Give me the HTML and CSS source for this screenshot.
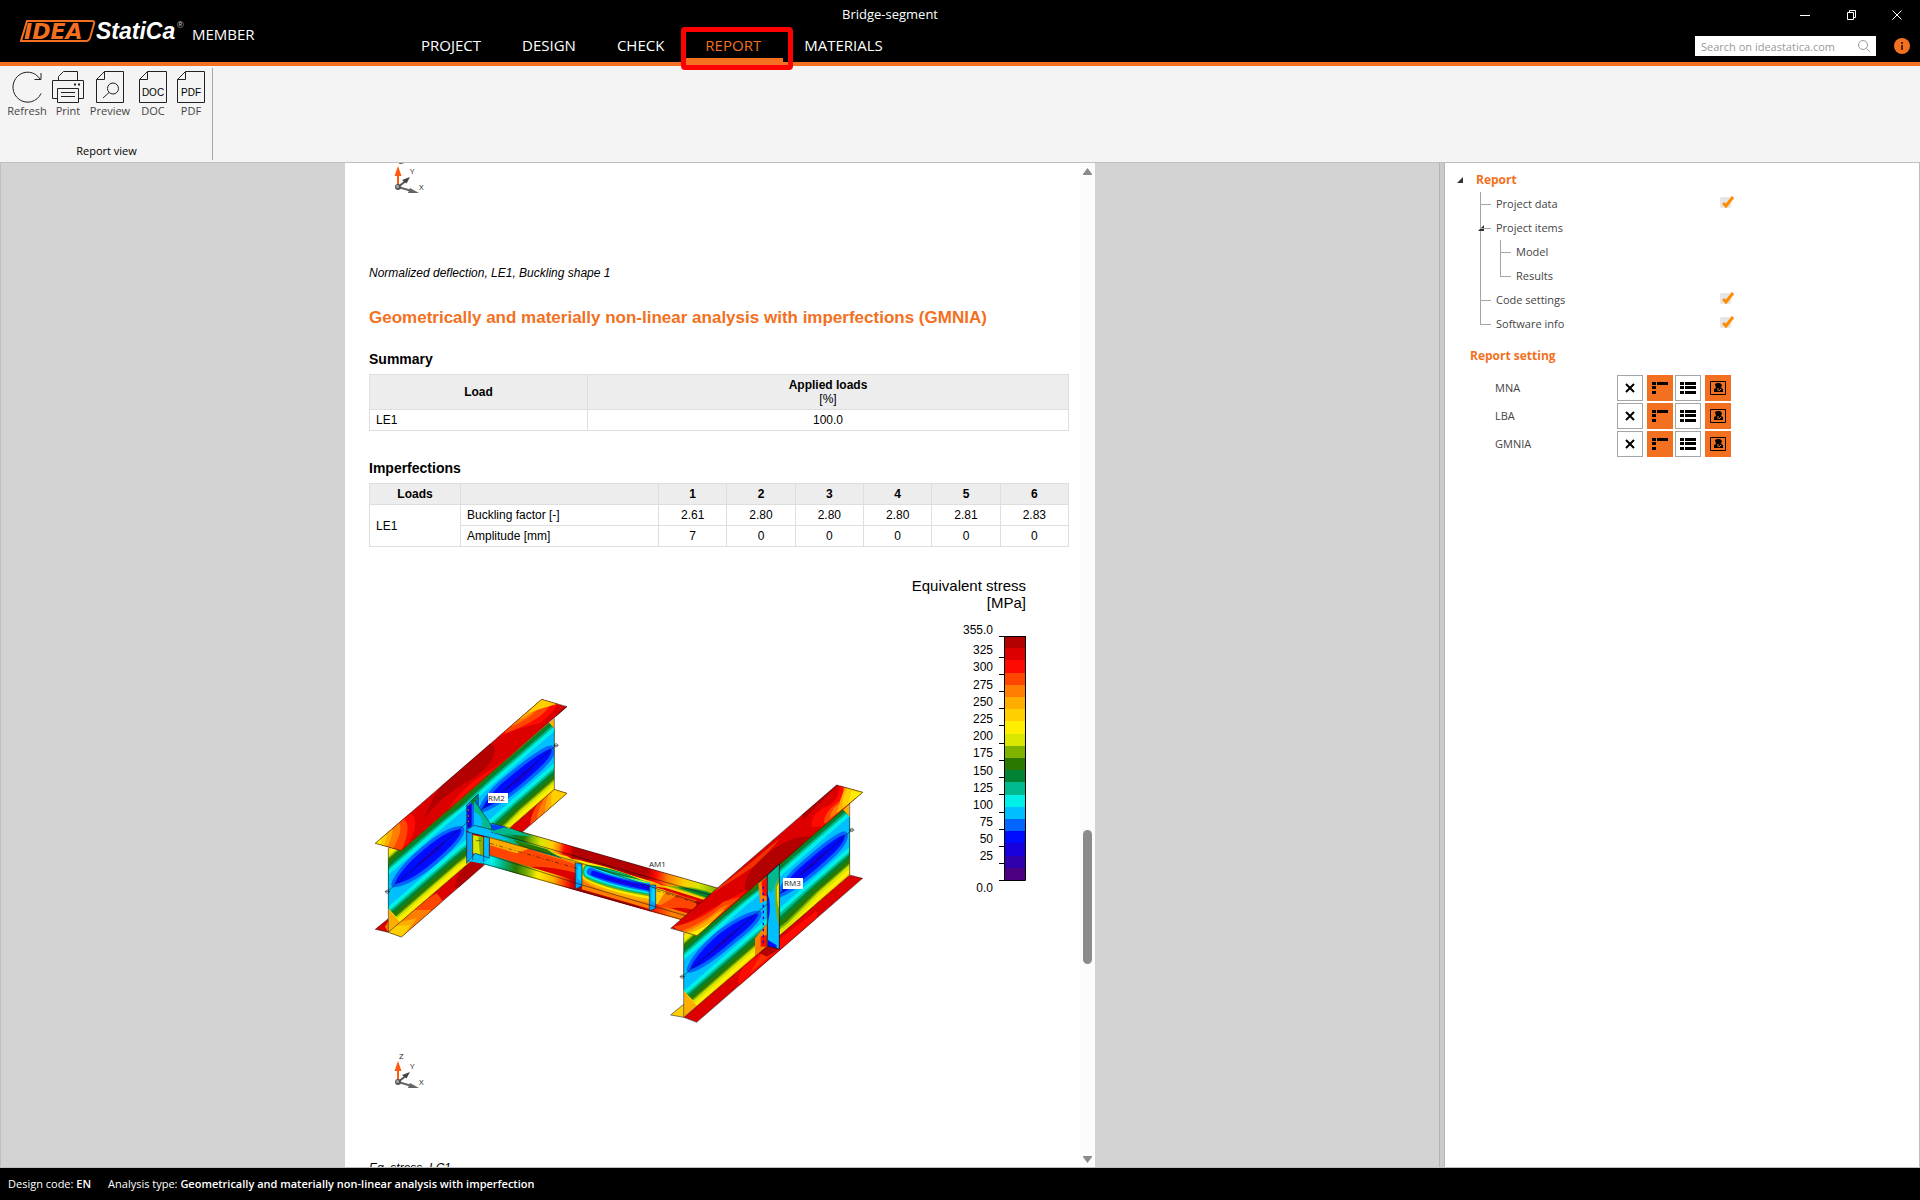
FILE: index.html
```html
<!DOCTYPE html>
<html lang="en">
<head>
<meta charset="utf-8">
<title>Bridge-segment</title>
<link rel="stylesheet" href="styles.css">
</head>
<body>
<header class="topbar">
  <div class="brand">
    <svg class="logo" width="166" height="26" viewBox="0 0 166 26" role="img" aria-label="IDEA StatiCa">
      <path d="M7 3 H72 Q75 3 74 6 L70 20 Q69 23 66 23 H1 Z" fill="#000" stroke="#f37021" stroke-width="2"/>
      <text class="logo-idea" x="4" y="21">IDEA</text>
      <text class="logo-statica" x="76" y="21">StatiCa</text>
      <text class="logo-mark" x="157" y="10">®</text>
    </svg>
    <span class="product">MEMBER</span>
  </div>
  <div class="doc-title">Bridge-segment</div>
  <div class="window-buttons">
    <button type="button" aria-label="Minimize"><svg width="12" height="12"><path d="M1 6.5h10" /></svg></button>
    <button type="button" aria-label="Restore"><svg width="12" height="12"><path d="M2.5 3.500h6v7h-6z M4.500 3V1.500h6v7H9" /></svg></button>
    <button type="button" aria-label="Close"><svg width="12" height="12"><path d="M1.500 1.500l9 9M10.500 1.500l-9 9" /></svg></button>
  </div>
  <nav class="tabs">
    <a href="#project">PROJECT</a>
    <a href="#design">DESIGN</a>
    <a href="#check">CHECK</a>
    <a href="#report" class="active" aria-current="page">REPORT</a>
    <a href="#materials">MATERIALS</a>
  </nav>
  <div class="tools">
    <div class="search">
      <input type="search" placeholder="Search on ideastatica.com" aria-label="Search on ideastatica.com">
      <svg width="14" height="14"><circle cx="6" cy="6" r="4.500"/><path d="M9.500 9.500l3.500 3.500"/></svg>
    </div>
    <button type="button" class="info" aria-label="Information"><svg width="16" height="16"><circle cx="8" cy="8" r="8" fill="#f37021"/><path d="M7 4h2v2H7zM7 7h2v5H7z" fill="#5a2500"/></svg></button>
  </div>
</header>

<section class="ribbon">
  <div class="ribbon-group">
    <div class="ribbon-buttons">
      <button type="button"><svg width="32" height="32"><path d="M30 22.500A14.700 15 0 1 1 29 8M30 2v6.500h-6.500"/></svg>Refresh</button>
      <button type="button"><svg width="32" height="32"><path d="M6.500 9V5.500l5-5h14V9M5 27.500H.5V9.500h31v18H27M5.500 27V17.500h21V27M5.500 22V31.500h21V22M9 21.500h14M9 25.500h14"/><path d="M22 13.500h2M26 13.500h2" class="bold"/></svg>Print</button>
      <button type="button"><svg width="32" height="32"><path d="M2.500 8.500l8-8h19v31h-27zM2.500 8.500h8v-8"/><circle cx="19" cy="17.500" r="5.500"/><path d="M15 21.500L9 27"/></svg>Preview</button>
      <button type="button"><svg width="32" height="32"><path d="M2.500 8.500l8-8h19v31h-27zM2.500 8.500h8v-8"/><text x="16" y="25">DOC</text></svg>DOC</button>
      <button type="button"><svg width="32" height="32"><path d="M2.500 8.500l8-8h19v31h-27zM2.500 8.500h8v-8"/><text x="16" y="25">PDF</text></svg>PDF</button>
    </div>
    <div class="ribbon-label">Report view</div>
  </div>
</section>

<main class="workspace">
  <section class="viewer">
    <div class="sheet">
      <article class="report">
        <svg class="axes-cut" width="60" height="52" viewBox="385 163 60 52" aria-hidden="true">
          <use href="#axes" x="398" y="187"/>
        </svg>
        <p class="caption">Normalized deflection, LE1, Buckling shape 1</p>
        <h2>Geometrically and materially non-linear analysis with imperfections (GMNIA)</h2>
        <h3>Summary</h3>
        <table class="summary">
          <colgroup><col class="c-load"><col></colgroup>
          <thead><tr><th>Load</th><th>Applied loads<br><span>[%]</span></th></tr></thead>
          <tbody><tr><td class="left">LE1</td><td>100.0</td></tr></tbody>
        </table>
        <h3>Imperfections</h3>
        <table class="imperfections">
          <colgroup><col class="c-loads"><col class="c-name"><col span="6"></colgroup>
          <thead><tr><th>Loads</th><th></th><th>1</th><th>2</th><th>3</th><th>4</th><th>5</th><th>6</th></tr></thead>
          <tbody>
            <tr><td class="left" rowspan="2">LE1</td><td class="left">Buckling factor [-]</td><td>2.61</td><td>2.80</td><td>2.80</td><td>2.80</td><td>2.81</td><td>2.83</td></tr>
            <tr><td class="left">Amplitude [mm]</td><td>7</td><td>0</td><td>0</td><td>0</td><td>0</td><td>0</td></tr>
          </tbody>
        </table>

        <figure>
          <svg class="model" width="500" height="544" viewBox="369 566 500 544" role="img" aria-label="Equivalent stress on the bridge segment">
            <defs>
              <g id="axes">
                <path d="M0 0L9 -7" stroke="#555" stroke-width="2"/><path d="M12 -10L8.500 -3.500L4 -7Z" fill="#444"/>
                <path d="M0 0L14 4" stroke="#666" stroke-width="2"/><path d="M21 6L10 6L12 1Z" fill="#666"/>
                <path d="M0 0V-12" stroke="#ff5a10" stroke-width="2"/><path d="M0 -21L3.500 -11H-3.500Z" fill="#ff5a10"/>
                <circle r="3" fill="#555"/><circle r="1.500" cx="-.5" cy="-.5" fill="#aaa"/>
                <text class="tag" x="1" y="-23">Z</text><text class="tag" x="12" y="-13">Y</text><text class="tag" x="21" y="3">X</text>
              </g>
              <clipPath id="webL"><path d="M85 503L124 512L583 115V328L85 757Z"/></clipPath>
              <clipPath id="topL"><path d="M46 490L545 58L621 80L124 512Z"/></clipPath>
              <clipPath id="botL"><path d="M85 757L124 771L621 340L583 328Z"/></clipPath>
              <clipPath id="webR"><path d="M131 518L171 527L629 130V345L131 772Z"/></clipPath>
              <clipPath id="topR"><path d="M92 505L590 75L668 97L171 527Z"/></clipPath>
              <clipPath id="botR"><path d="M131 772L170 787L668 355L629 345Z"/></clipPath>
              <clipPath id="panel"><path d="M305 130L510 188V267L305 208Z"/></clipPath>
              <clipPath id="webC"><path d="M28 50L650 240V290L28 108Z"/></clipPath>
              <linearGradient id="farFlange" gradientUnits="userSpaceOnUse" x1="0" y1="0" x2="720" y2="90">
                <stop offset="0" stop-color="#0066ff"/><stop offset=".07" stop-color="#00bfff"/><stop offset=".1" stop-color="#00b98c"/><stop offset=".15" stop-color="#008433"/><stop offset=".19" stop-color="#2a7800"/><stop offset=".22" stop-color="#80b200"/><stop offset=".26" stop-color="#d8e600"/><stop offset=".31" stop-color="#ffcf00"/><stop offset=".34" stop-color="#ff7d00"/><stop offset=".36" stop-color="#ff0a00"/><stop offset=".39" stop-color="#dd0000"/><stop offset=".4" stop-color="#b30000"/><stop offset=".71" stop-color="#b30000"/><stop offset=".75" stop-color="#ff0a00"/><stop offset=".8" stop-color="#ff7d00"/><stop offset=".87" stop-color="#ffcf00"/><stop offset=".93" stop-color="#d8e600"/><stop offset="1" stop-color="#80b200"/>
              </linearGradient>
              <linearGradient id="lowFlange" gradientUnits="userSpaceOnUse" x1="-10" y1="0" x2="600" y2="80">
                <stop offset="0" stop-color="#00bfff"/><stop offset=".1" stop-color="#00f0e8"/><stop offset=".15" stop-color="#00b98c"/><stop offset=".22" stop-color="#2a7800"/><stop offset=".28" stop-color="#80b200"/><stop offset=".33" stop-color="#ffee00"/><stop offset=".41" stop-color="#ffae00"/><stop offset=".46" stop-color="#ff4600"/><stop offset=".5" stop-color="#dd0000"/><stop offset=".53" stop-color="#b30000"/><stop offset=".82" stop-color="#b30000"/><stop offset=".9" stop-color="#ff0a00"/><stop offset="1" stop-color="#ff7d00"/>
              </linearGradient>
            </defs>

            <!-- left girder RM2 -->
            <g transform="translate(360 680) scale(.33333)">
              <g clip-path="url(#botL)">
                <path d="M85 757L124 771L621 340L583 328Z" fill="#dd0000"/>
                <path d="M80 775L130 700L230 640L250 665L120 790Z" fill="#ff4600"/>
                <path d="M80 775L110 720L165 690L215 690L120 790Z" fill="#ff7d00"/>
                <path d="M80 775L105 730L170 715L120 790Z" fill="#ffae00"/>
                <path d="M80 775L85 740L150 735L120 790Z" fill="#ffcf00"/>
                <path d="M285 625Q290 570 340 540L380 545L300 620Z" fill="#b30000"/>
                <path d="M510 440Q510 390 560 340L640 330V360Z" fill="#ff4600"/>
                <path d="M530 420Q535 375 570 330L640 330V360Z" fill="#ff7d00"/>
                <path d="M555 400Q555 360 575 325L640 330V360Z" fill="#ffae00"/>
                <path d="M575 385Q570 350 580 320L640 330V360Z" fill="#ffcf00"/>
              </g>
              <path d="M46 748L85 716V757Z" fill="#dd0000"/><path d="M75 740L85 724V757Z" fill="#ff7d00"/>
              <g clip-path="url(#webL)" fill="none" stroke-linejoin="round">
                <path d="M85 503L124 512L583 115V328L85 757Z" fill="#ffae00"/>
                <path d="M230 690L340 585L600 350" stroke="#ff7d00" stroke-width="46"/>
                <path d="M240 690L340 595L500 450" stroke="#ff4600" stroke-width="34"/>
                <path d="M290 640L340 592L460 485" stroke="#dd0000" stroke-width="22"/>
                <path d="M300 370L350 325L400 290" stroke="#ff4600" stroke-width="40"/>
                <path d="M330 350L400 285" stroke="#ff0a00" stroke-width="22"/>
                <path d="M60 658L240 502Q290 462 340 432L430 340L610 184" stroke="#ffcf00" stroke-width="196"/>
                <path d="M60 657L240 501Q290 462 340 430L430 338L610 182" stroke="#ffee00" stroke-width="182"/>
                <path d="M60 655L240 499Q290 460 340 428L430 337L610 180" stroke="#d8e600" stroke-width="164"/>
                <path d="M60 654L240 498Q290 458 340 425L430 335L610 178" stroke="#80b200" stroke-width="152"/>
                <path d="M60 654L240 498Q290 457 340 422L430 334L610 178" stroke="#2a7800" stroke-width="144"/>
                <path d="M60 654L240 498Q290 456 340 420L430 334L610 178" stroke="#008433" stroke-width="124"/>
                <path d="M60 654L240 498Q290 455 340 418L430 334L610 178" stroke="#00b98c" stroke-width="106"/>
                <path d="M60 654L240 498Q290 455 340 416L430 334L610 178" stroke="#00f0e8" stroke-width="94"/>
                <path d="M60 654L240 498Q290 455 340 414L430 334L610 178" stroke="#00bfff" stroke-width="72"/>
                <g stroke="#0066ff" stroke-width="20" fill="#000cff" paint-order="stroke">
                  <path d="M104 612Q120 565 215 490Q270 448 303 448Q310 465 250 520Q160 605 104 612Z"/>
                  <path d="M365 388Q390 335 450 290Q540 215 572 206Q585 218 540 262Q430 365 365 388Z"/>
                </g>
                <path d="M165 562Q205 515 260 480Q235 520 165 562ZM430 335Q475 285 530 250Q500 295 430 335Z" fill="#1700dc"/>
              </g>
              <g clip-path="url(#topL)">
                <path d="M46 490L545 58L621 80L124 512Z" fill="#dd0000"/>
                <path d="M190 420Q230 310 330 225Q400 170 405 205Q400 260 330 300Q240 350 190 420Z" fill="#b30000"/>
                <path d="M580 120Q600 80 640 70V90L560 150Z" fill="#b30000"/>
                <path d="M250 410Q300 320 400 265L470 210L420 290L270 420Z" fill="#ff0a00"/>
                <path d="M300 380Q340 320 400 275L420 265L350 345Z" fill="#ff4600"/><path d="M325 350Q370 300 400 285L360 335Z" fill="#ff7d00"/>
                <path d="M40 400H150Q190 420 130 520H40Z" fill="#ff0a00"/>
                <path d="M40 395L130 415Q160 440 120 520H40Z" fill="#ff4600"/>
                <path d="M40 415L115 425Q135 450 90 520H40Z" fill="#ff7d00"/>
                <path d="M40 435L95 440Q105 465 70 520H40Z" fill="#ffae00"/>
                <path d="M40 450L80 450Q85 475 60 520H40Z" fill="#ffcf00"/><path d="M40 470L65 470L60 510H40Z" fill="#ffee00"/>
                <path d="M410 175Q450 150 540 130Q580 100 600 60L540 40L400 150Z" fill="#ff0a00"/>
                <path d="M435 160Q520 130 555 95L585 60L540 40L440 130Z" fill="#ff4600"/>
                <path d="M450 140Q520 115 555 60L540 40L440 130Z" fill="#ff7d00"/>
                <path d="M480 118Q520 100 560 60L545 40L470 110Z" fill="#ffae00"/>
                <path d="M505 98Q545 85 590 72L545 50Z" fill="#ffcf00"/>
              </g>
              <g class="edge">
                <path d="M46 490L545 58L621 80L124 512ZM85 503V757M583 115V328M46 748L85 757L124 771L621 340L583 328L85 757M46 748L85 716"/>
                <path d="M82 635L588 196"/><circle cx="82" cy="635" r="5"/><circle cx="588" cy="196" r="5"/><path d="M74 635h16M580 196h16"/>
              </g>
            </g>

            <!-- cross member AM1 -->
            <g transform="translate(480 820) scale(.33333)">
              <path d="M-40 30L35 10L740 212L640 310L0 128L-40 120Z" fill="#dd0000"/>
              <path d="M-35 25L35 10L740 212L700 235L20 50Z" fill="url(#farFlange)"/>
              <path d="M150 80L260 108L300 130L250 118Z" fill="#ffcf00"/>
              <path d="M-30 30L60 45L200 88L250 118L20 52Z" fill="#00b98c"/><path d="M100 60L200 88L230 108L120 78Z" fill="#2a7800"/><path d="M-20 30L50 42L90 62L40 54Z" fill="#00bfff"/>
              <path d="M540 195L700 215L690 245L560 205Z" fill="#ffcf00"/><path d="M560 198Q640 195 710 222L690 240Q620 215 560 198Z" fill="#80b200"/><path d="M590 202Q650 204 705 224L690 236Z" fill="#008433"/>
              <g clip-path="url(#webC)">
                <path d="M28 50L650 240V290L28 108Z" fill="#ff4600"/>
                <path d="M28 50L150 85L110 100L28 75Z" fill="#ffae00"/>
                <path d="M60 75Q200 100 290 135L280 120Z" fill="#ff7d00"/>
                <path d="M110 145Q190 130 290 160V210Z" fill="#dd0000"/>
                <path d="M170 165Q240 165 290 178V210Z" fill="#b30000"/>
                <path d="M525 200L600 220L560 245L525 265Z" fill="#ff7d00"/><path d="M525 195L560 210L540 240L525 265Z" fill="#ffcf00"/>
                <path d="M550 270Q600 255 660 275V300Z" fill="#dd0000"/>
              </g>
              <path d="M-40 105L28 105L640 285L620 305L0 130L-40 122Z" fill="url(#lowFlange)"/>
              <path d="M250 118Q290 110 340 135L510 182Q540 190 560 205L530 200L290 130Z" fill="#ffae00"/>
              <path d="M270 120Q330 124 400 148L525 190L290 128Z" fill="#ffee00"/>
              <g clip-path="url(#panel)" fill="none" stroke-linecap="round">
                <path d="M300 125H515V270L300 210Z" fill="#ff7d00"/>
                <path d="M335 157Q400 195 530 215" stroke="#ffae00" stroke-width="70"/>
                <path d="M333 155Q400 190 530 210" stroke="#ffee00" stroke-width="60"/>
                <path d="M331 155Q400 188 530 207" stroke="#80b200" stroke-width="50"/>
                <path d="M330 155Q400 188 530 206" stroke="#00b98c" stroke-width="42"/>
                <path d="M330 155Q400 187 530 206" stroke="#00f0e8" stroke-width="34"/>
                <path d="M332 155Q400 187 530 207" stroke="#0066ff" stroke-width="24"/>
                <path d="M340 160Q420 188 530 208" stroke="#000cff" stroke-width="15"/>
                <path d="M380 173Q440 190 530 208" stroke="#1700dc" stroke-width="6"/>
                <path d="M340 140L500 188" stroke="#d8e600" stroke-width="3"/>
              </g>
              <path d="M320 134Q400 142 485 180Q400 165 320 134Z" fill="#008433"/><path d="M345 142Q400 148 460 172Z" fill="#00b98c"/>
              <path d="M286 128L306 132V198L286 208Z" fill="#00a0ff"/><path d="M294 135L303 140V185L292 175Z" fill="#00d5ff"/>
              <path d="M508 195L527 195V265L508 273Z" fill="#00a0ff"/><path d="M516 205L524 205V250L514 240Z" fill="#00d5ff"/>
              <g class="edge">
                <path d="M35 10L740 212M30 35L690 225M-35 35L290 125L660 250M25 105L290 190L620 288M0 128L290 210L610 300"/>
                <path d="M30 70L290 145M530 212L680 258" stroke-dasharray="12 7 3 7"/>
                <path d="M286 128L306 132V198L286 208ZM508 195H527V265L508 273Z"/>
              </g>
            </g>

            <!-- connection of AM1 to RM2 -->
            <g transform="translate(360 680) scale(.33333)">
              <path d="M320 375L355 342V435L320 450Z" fill="#0066ff"/><path d="M322 380L335 370V440L322 445Z" fill="#1700dc"/><path d="M330 365L352 345V360L340 375Z" fill="#008433"/>
              <path d="M342 360L395 437V450L342 440Z" fill="#00b98c"/><path d="M342 395Q370 405 368 440L342 436Z" fill="#00bfff"/>
              <path d="M320 450L340 436L400 448L385 470L330 458Z" fill="#00bfff"/><path d="M360 430L450 445L520 470L400 458Z" fill="#00b98c"/><path d="M390 433L440 440L400 452Z" fill="#0040ff"/>
              <path d="M320 455L338 460V540L320 550Z" fill="#00a0ff"/><path d="M338 465L370 472V530L338 520Z" fill="#d8e600"/><path d="M355 468L370 472V530L360 525Z" fill="#80b200"/>
              <path d="M372 470L388 474V535L372 547Z" fill="#00bfff"/><path d="M320 540L345 520L375 528L370 548Z" fill="#00bfff"/>
              <path d="M325 372v4m0 12v4m0 14v4m0 12v4m0 84v4" stroke="#ff4600" stroke-width="4"/>
              <g class="edge"><path d="M320 375L355 342V375M320 375V552M342 360L395 437V450M322 450L342 436L400 450M320 455L385 472M338 460V540M371 470V546M388 474V534M320 548L345 520L388 534M348 482h14"/></g>
            </g>

            <!-- right girder RM3 -->
            <g transform="translate(640 760) scale(.33333)">
              <g clip-path="url(#botR)">
                <path d="M131 772L170 787L668 355L629 345Z" fill="#dd0000"/>
                <path d="M295 665Q300 610 350 590L440 520L520 460Q540 440 525 485L300 680Z" fill="#ff0a00"/>
                <path d="M370 570L420 560L330 640Z" fill="#ff4600" opacity=".6"/><path d="M350 575L400 550L420 566L380 590Z" fill="#b30000"/>
              </g>
              <path d="M92 765L131 733V772Z" fill="#ffcf00"/>
              <g clip-path="url(#webR)" fill="none" stroke-linejoin="round">
                <path d="M131 518L171 527L629 130V345L131 772Z" fill="#ffae00"/>
                <path d="M200 735L380 578L620 370" stroke="#ff7d00" stroke-width="44"/>
                <path d="M240 700L380 578L480 492" stroke="#ff4600" stroke-width="22"/>
                <path d="M320 410L400 340" stroke="#ff4600" stroke-width="46"/><path d="M350 400L390 350" stroke="#dd0000" stroke-width="26"/>
                <path d="M110 669L280 520Q330 478 390 445L480 350L650 202" stroke="#ffcf00" stroke-width="196"/>
                <path d="M110 668L280 519Q330 477 390 443L480 349L650 200" stroke="#ffee00" stroke-width="182"/>
                <path d="M110 667L280 518Q330 475 390 440L480 348L650 198" stroke="#d8e600" stroke-width="164"/>
                <path d="M110 666L280 517Q330 474 390 437L480 346L650 196" stroke="#80b200" stroke-width="150"/>
                <path d="M110 665L280 517Q330 473 390 434L480 345L650 196" stroke="#2a7800" stroke-width="142"/>
                <path d="M110 665L280 517Q330 472 390 430L480 344L650 196" stroke="#008433" stroke-width="122"/>
                <path d="M110 665L280 517Q330 472 390 427L480 344L650 196" stroke="#00b98c" stroke-width="104"/>
                <path d="M110 665L280 517Q330 472 390 425L480 344L650 196" stroke="#00f0e8" stroke-width="92"/>
                <path d="M110 665L280 517Q330 472 390 423L480 344L650 196" stroke="#00bfff" stroke-width="70"/>
                <g stroke="#0066ff" stroke-width="20" fill="#000cff" paint-order="stroke">
                  <path d="M150 628Q165 585 240 520Q320 462 355 462Q350 485 290 532Q190 620 150 628Z"/>
                  <path d="M420 402Q440 355 495 310Q580 235 612 224Q622 238 580 280Q480 375 420 402Z"/>
                </g>
                <path d="M200 590Q245 535 300 502Q270 545 200 590ZM470 350Q515 300 570 262Q540 310 470 350Z" fill="#1700dc"/>
                <path d="M355 370L382 350V420L360 430Z" fill="#ff7d00"/><path d="M365 365L382 350V410L368 405Z" fill="#ff0a00"/>
                <path d="M345 535L382 490V560L345 590Z" fill="#ff7d00"/><path d="M362 530L382 525V560L362 560Z" fill="#ff0a00"/>
                <path d="M370 380V560" stroke="#1700dc" stroke-width="4" stroke-dasharray="8 10"/>
              </g>
              <g clip-path="url(#topR)">
                <path d="M92 505L590 75L668 97L171 527Z" fill="#dd0000"/>
                <path d="M315 390Q310 340 380 280Q460 225 510 230L450 290L330 390Z" fill="#b30000"/>
                <path d="M490 180Q520 150 600 70L570 60L480 140Z" fill="#b30000"/>
                <path d="M200 410L330 310L420 235Q400 265 340 320Q280 360 200 410Z" fill="#ff4600" opacity=".7"/>
                <path d="M120 505Q200 450 320 390L280 440L160 540Z" fill="#ff0a00"/>
                <path d="M100 500Q190 480 250 425L300 410L160 540Z" fill="#ff4600"/>
                <path d="M120 515Q190 490 240 445L270 430L160 540Z" fill="#ff7d00"/>
                <path d="M130 520Q190 495 230 460L255 448L160 540Z" fill="#ffae00"/>
                <path d="M145 520Q180 510 215 485L170 540Z" fill="#ffee00"/>
                <path d="M515 200Q510 160 560 140Q600 120 600 70L680 90L570 200Z" fill="#ff0a00"/>
                <path d="M552 190Q550 160 590 130Q620 110 605 70L680 90L570 190Z" fill="#ff4600"/>
                <path d="M570 175Q570 150 600 130L620 75L680 90Z" fill="#ff7d00"/>
                <path d="M590 160Q600 120 615 80L680 90Z" fill="#ffae00"/>
                <path d="M608 145Q605 110 625 82L680 90Z" fill="#ffcf00"/><path d="M625 128L635 92L672 97Z" fill="#ffee00"/>
              </g>
              <path d="M382 345L418 312V567L382 558Z" fill="#00bfff"/>
              <path d="M384 345L418 314V350Q400 380 395 400L384 390Z" fill="#00b98c"/>
              <path d="M405 380Q418 350 418 350V500Q404 460 405 380Z" fill="#80b200"/><path d="M411 380L418 365V450Q410 430 411 380Z" fill="#ffee00"/>
              <path d="M382 400Q396 430 384 490ZM384 540L410 556V565L384 558Z" fill="#000cff"/>
              <g class="edge">
                <path d="M92 505L590 75L668 97L171 527ZM131 518V772M629 130V345M92 765L131 772L170 787L668 355L629 345M92 765L131 733M131 772L382 558M418 527L629 345"/>
                <path d="M382 345L418 312V567L382 558Z" class="strong"/>
                <path d="M127 650L382 432M418 402L635 210"/><circle cx="127" cy="650" r="5"/><circle cx="635" cy="210" r="5"/><path d="M119 650h16M627 210h16"/>
              </g>
            </g>

            <path d="M488 793h20v10h-20zM783 878h20v11h-20z" fill="#fff"/>
            <text class="tag" x="488" y="801">RM2</text>
            <text class="tag" x="649" y="867">AM1</text>
            <text class="tag" x="784" y="886">RM3</text>
            <use href="#axes" x="398" y="1082"/>
          </svg>
          <svg class="legend" width="160" height="344" viewBox="869 566 160 344" role="img" aria-label="Equivalent stress scale">
            <g class="legend-title"><text x="1026" y="591">Equivalent stress</text><text x="1026" y="608">[MPa]</text></g>
            <g id="bands" transform="translate(1005 636)">
              <rect width="21" height="13" fill="#b30000"/><rect y="12" width="21" height="13" fill="#dd0000"/><rect y="24" width="21" height="13" fill="#ff0a00"/><rect y="37" width="21" height="13" fill="#ff4600"/><rect y="49" width="21" height="13" fill="#ff7d00"/><rect y="61" width="21" height="13" fill="#ffae00"/><rect y="73" width="21" height="13" fill="#ffcf00"/><rect y="85" width="21" height="13" fill="#ffee00"/><rect y="98" width="21" height="13" fill="#d8e600"/><rect y="110" width="21" height="13" fill="#80b200"/><rect y="122" width="21" height="13" fill="#2a7800"/><rect y="134" width="21" height="13" fill="#008433"/><rect y="146" width="21" height="13" fill="#00b98c"/><rect y="159" width="21" height="13" fill="#00f0e8"/><rect y="171" width="21" height="13" fill="#00bfff"/><rect y="183" width="21" height="13" fill="#0066ff"/><rect y="195" width="21" height="13" fill="#000cff"/><rect y="207" width="21" height="13" fill="#1700dc"/><rect y="220" width="21" height="13" fill="#3000ad"/><rect y="232" width="21" height="12" fill="#4c0082"/>
              <path class="frame" d="M-6 .5H20.500V244.500H-6M-.5 0V244M-6 21.500H0M-6 38.500H0M-6 55.500H0M-6 72.500H0M-6 89.500H0M-6 107.500H0M-6 124.500H0M-6 141.500H0M-6 158.500H0M-6 176.500H0M-6 193.500H0M-6 210.500H0M-6 227.500H0"/>
            </g>
            <g class="legend-values">
              <text x="993" y="634">355.0</text><text x="993" y="654">325</text><text x="993" y="671">300</text><text x="993" y="689">275</text><text x="993" y="706">250</text><text x="993" y="723">225</text><text x="993" y="740">200</text><text x="993" y="757">175</text><text x="993" y="775">150</text><text x="993" y="792">125</text><text x="993" y="809">100</text><text x="993" y="826">75</text><text x="993" y="843">50</text><text x="993" y="860">25</text><text x="993" y="892">0.0</text>
            </g>
          </svg>
        </figure>
        <p class="caption">Eq. stress, LC1</p>
      </article>
      <div class="scrollbar" aria-hidden="true">
        <svg width="9" height="7"><path d="M4.500 0L9 6V7H0V6Z"/></svg>
        <div class="track"><div class="thumb"></div></div>
        <svg width="9" height="7"><path d="M4.500 7L9 1V0H0V1Z"/></svg>
      </div>
    </div>
  </section>
  <div class="splitter"></div>

  <aside class="panel">
    <ul class="tree">
      <li>
        <div class="node root"><svg class="expander" width="6" height="6"><path d="M6 0V6H0Z"/></svg>Report</div>
        <ul>
          <li><div class="node"><label for="c1">Project data</label><span class="check"><input type="checkbox" id="c1" checked><svg width="12" height="12"><path d="M1 7l3 3L11 1"/></svg></span></div></li>
          <li><div class="node"><svg class="expander over" width="6" height="6"><path d="M6 0V6H0Z"/></svg>Project items</div>
            <ul>
              <li><div class="node">Model</div></li>
              <li><div class="node">Results</div></li>
            </ul>
          </li>
          <li><div class="node"><label for="c2">Code settings</label><span class="check"><input type="checkbox" id="c2" checked><svg width="12" height="12"><path d="M1 7l3 3L11 1"/></svg></span></div></li>
          <li><div class="node"><label for="c3">Software info</label><span class="check"><input type="checkbox" id="c3" checked><svg width="12" height="12"><path d="M1 7l3 3L11 1"/></svg></span></div></li>
        </ul>
      </li>
    </ul>
    <h4>Report setting</h4>
    <svg class="symbols" width="0" height="0" aria-hidden="true"><defs>
      <g id="i-none"><path d="M1 1l8 8M9 1l-8 8" transform="translate(3 3)" stroke="#000" stroke-width="2" fill="none"/></g>
      <g id="i-short"><path d="M0 2h4v3H0zM5 2h11v3H5zM0 6h4v3H0zM0 11h4v3H0z"/></g>
      <g id="i-full"><path d="M0 2h4v3H0zM5 2h11v3H5zM0 6h4v3H0zM5 6h11v3H5zM0 11h4v3H0zM5 11h11v3H5z"/></g>
      <g id="i-image"><path d="M.5 1.500h15v13H.5z" fill="none" stroke="#000"/><path d="M5 4l2-1h3l2 2-1 3 2 1v3H4V9l2-1z"/><path d="M8 8v3M9 11l2-2" stroke="#f37021"/></g>
    </defs></svg>
    <div class="settings">
      <div class="setting"><span>MNA</span><div class="choices">
        <button type="button" aria-label="None"><svg width="16" height="16"><use href="#i-none"/></svg></button><button type="button" class="on" aria-label="Brief"><svg width="16" height="16"><use href="#i-short"/></svg></button>
        <button type="button" aria-label="Detailed"><svg width="16" height="16"><use href="#i-full"/></svg></button><button type="button" class="on" aria-label="Pictures"><svg width="16" height="16"><use href="#i-image"/></svg></button>
      </div></div>
      <div class="setting"><span>LBA</span><div class="choices">
        <button type="button" aria-label="None"><svg width="16" height="16"><use href="#i-none"/></svg></button><button type="button" class="on" aria-label="Brief"><svg width="16" height="16"><use href="#i-short"/></svg></button>
        <button type="button" aria-label="Detailed"><svg width="16" height="16"><use href="#i-full"/></svg></button><button type="button" class="on" aria-label="Pictures"><svg width="16" height="16"><use href="#i-image"/></svg></button>
      </div></div>
      <div class="setting"><span>GMNIA</span><div class="choices">
        <button type="button" aria-label="None"><svg width="16" height="16"><use href="#i-none"/></svg></button><button type="button" class="on" aria-label="Brief"><svg width="16" height="16"><use href="#i-short"/></svg></button>
        <button type="button" aria-label="Detailed"><svg width="16" height="16"><use href="#i-full"/></svg></button><button type="button" class="on" aria-label="Pictures"><svg width="16" height="16"><use href="#i-image"/></svg></button>
      </div></div>
    </div>
  </aside>
</main>

<footer class="status">
  <span>Design code: <b>EN</b></span>
  <span>Analysis type: <b>Geometrically and materially non-linear analysis with imperfection</b></span>
</footer>
</body>
</html>
```
FILE: styles.css
```css
* { box-sizing: border-box; }
body {
  margin: 0;
  height: 100vh;
  display: flex;
  flex-direction: column;
  background: #f4f4f4;
  color: #444;
  font: 12px/16px "Open Sans", "Noto Sans", sans-serif;
}
button { margin: 0; padding: 0; border: 0; background: none; font: inherit; color: inherit; }
h2, h3, h4, p, figure, ul { margin: 0; padding: 0; }
ul { list-style: none; }

/* top bar */
.topbar {
  flex: none;
  display: grid;
  grid-template-columns: 401px 1fr 140px;
  grid-template-rows: 30px 32px;
  background: #000;
  color: #fff;
  border-bottom: 4px solid #f37021;
}
.brand { grid-area: 1 / 1 / 3 / 2; display: flex; align-items: center; gap: 6px; padding-left: 20px; }
.product { font-size: 15px; line-height: 20px; padding-top: 6px; }
.logo-idea { font: italic bold 22px "DejaVu Sans", sans-serif; fill: #f37021; }
.logo-statica { font: italic bold 23px "Liberation Sans", sans-serif; fill: #fff; }
.logo-mark { font: 9px "Liberation Sans", sans-serif; fill: #ccc; }
.doc-title { grid-area: 1 / 1 / 2 / 3; text-align: center; font-size: 13px; line-height: 28px; }
.window-buttons { grid-area: 1 / 3 / 2 / 4; display: flex; justify-content: flex-end; }
.window-buttons button { width: 46px; height: 30px; display: grid; place-items: center; }
.window-buttons path { fill: none; stroke: #fff; }
.tabs { grid-area: 2 / 2 / 3 / 3; display: flex; gap: 1px; font-size: 15px; line-height: 30px; }
.tabs a { position: relative; padding: 0 20px; color: #fff; text-decoration: none; }
.tabs a.active { padding-right: 22px; color: #f37021; box-shadow: inset 0 -4px #f37021; }
.tabs a.active::after {
  content: "";
  position: absolute;
  inset: -3px -10px -8px -4px;
  border: 5px solid #f00;
  border-radius: 4px;
  z-index: 1;
}
.tools { grid-area: 2 / 2 / 3 / 4; justify-self: end; display: flex; align-items: center; gap: 18px; padding-right: 10px; }
.search { display: flex; align-items: center; width: 181px; height: 20px; background: #fff; padding: 0 5px 0 6px; }
.search input { flex: 1; min-width: 0; border: 0; padding: 0; background: none; font: 11px "Open Sans", sans-serif; outline: 0; }
.search input::placeholder { color: #999; }
.search svg { fill: none; stroke: #999; }
.info { height: 16px; }

/* ribbon */
.ribbon { flex: none; height: 97px; padding: 2px 0; border-bottom: 1px solid #bfbfbf; }
.ribbon-group { display: flex; flex-direction: column; justify-content: space-between; width: 213px; height: 92px; border-right: 1px solid #a5a5a5; padding: 3px 0 1px 5px; }
.ribbon-buttons { display: grid; grid-template-columns: 44px 38px 46px 40px 36px; justify-items: center; }
.ribbon-buttons button { display: flex; flex-direction: column; align-items: center; font-size: 11px; }
.ribbon-buttons svg { fill: none; stroke: #222; }
.ribbon-buttons .bold { stroke-width: 2; }
.ribbon-buttons text { font: 10px "Liberation Sans", sans-serif; fill: #000; stroke: none; text-anchor: middle; }
.ribbon-label { padding-right: 4px; text-align: center; color: #000; font-size: 11px; }

/* workspace */
.workspace { flex: 1; min-height: 0; display: flex; border-bottom: 1px solid #bfbfbf; }
.viewer { flex: 1; min-width: 0; display: flex; justify-content: center; background: #d3d3d3; border-left: 1px solid #bfbfbf; border-right: 1px solid #b5b5b5; overflow: hidden; }
.splitter { flex: none; width: 4px; background: #cbcbcb; }
.sheet { width: 750px; display: flex; background: #fff; overflow: hidden; }
.report { flex: 1; padding: 0 11px 0 24px; color: #000; font: 12px/14px "Liberation Sans", Arial, sans-serif; }
.axes-cut { display: block; margin-left: 16px; }
.caption { font-style: italic; padding-top: 51px; line-height: 14px; }
.report h2 { padding-top: 28px; font-size: 17px; line-height: 20px; color: #f37021; white-space: nowrap; }
.report h3 { padding: 23px 0 7px; font-size: 14px; line-height: 16px; }
.report table { width: 700px; border-collapse: collapse; table-layout: fixed; }
.report th, .report td { height: 21px; border: 1px solid #dedede; padding: 3px 6px; text-align: center; }
.report th { background: #ededed; }
.report th span { font-weight: normal; }
.report .left { text-align: left; }
.report .c-load { width: 218px; }
.report .c-loads { width: 91px; }
.report .c-name { width: 198px; }
.report .summary + h3 { padding-top: 29px; }
figure { display: flex; align-items: flex-start; padding-top: 19px; }
.tag { font: 8px "Open Sans", sans-serif; fill: #222; }
.edge { fill: none; stroke: #111; stroke-width: 2; stroke-opacity: .8; }
.edge .strong { stroke-width: 3; }
.legend-title { font-size: 15px; text-anchor: end; }
.legend-values { font-size: 12px; text-anchor: end; }
.frame { fill: none; stroke: #000; }

.scrollbar { flex: none; width: 15px; display: flex; flex-direction: column; align-items: center; gap: 4px; padding: 5px 0 4px; background: #fcfcfc; }
.scrollbar svg { fill: #8b8b8b; }
.track { flex: 1; display: grid; grid-template-rows: 650fr 133fr 188fr; }
.thumb { grid-row: 2; width: 9px; border-radius: 5px; background: #8b8b8b; }

/* side panel */
.panel { flex: none; width: 476px; background: #fff; border-left: 1px solid #b5b5b5; border-right: 1px solid #bfbfbf; padding: 5px 0 0 12px; font-size: 11px; }
.node { position: relative; display: flex; align-items: center; height: 24px; }
.root { gap: 13px; font-size: 12px; font-weight: bold; color: #f37021; }
.expander { fill: #333; }
.over { position: absolute; left: -18px; }
.tree ul { padding-left: 39px; position: relative; }
.tree ul ul { padding-left: 20px; }
.tree ul > li { position: relative; }
.tree ul > li::before { content: ""; position: absolute; left: -16px; top: 0; bottom: 0; border-left: 1px solid #a5a5a5; }
.tree ul > li:last-child::before { bottom: auto; height: 12px; }
.tree ul > li::after { content: ""; position: absolute; left: -16px; top: 12px; width: 11px; border-top: 1px solid #a5a5a5; }
.check { position: absolute; left: 224px; top: 4px; width: 14px; height: 12px; }
.check input { appearance: none; display: block; width: 11px; height: 11px; margin: 1px 0 0; border-radius: 2px; background: #e6e6e6; }
.check svg { position: absolute; left: 2px; top: 0; fill: none; stroke: #ff8c00; stroke-width: 3; pointer-events: none; }
.panel h4 { padding: 10px 0 9px 13px; font-size: 12px; line-height: 20px; color: #f37021; }
.symbols { position: absolute; }
.settings { display: grid; gap: 2px; }
.setting { display: grid; grid-template-columns: 122px auto; align-items: center; padding-left: 38px; height: 26px; }
.choices { display: grid; grid-template-columns: 30px 28px 30px 26px; }
.choices button { display: grid; place-items: center; width: 26px; height: 26px; border: 1px solid #a5a5a5; background: #fff; }
.choices .on { border-color: #f37021; background: #f37021; }

/* status bar */
.status { flex: none; display: flex; gap: 17px; height: 32px; padding: 0 8px; background: #000; color: #fff; font-size: 11px; line-height: 32px; }
.status b { font-weight: 600; }
```
